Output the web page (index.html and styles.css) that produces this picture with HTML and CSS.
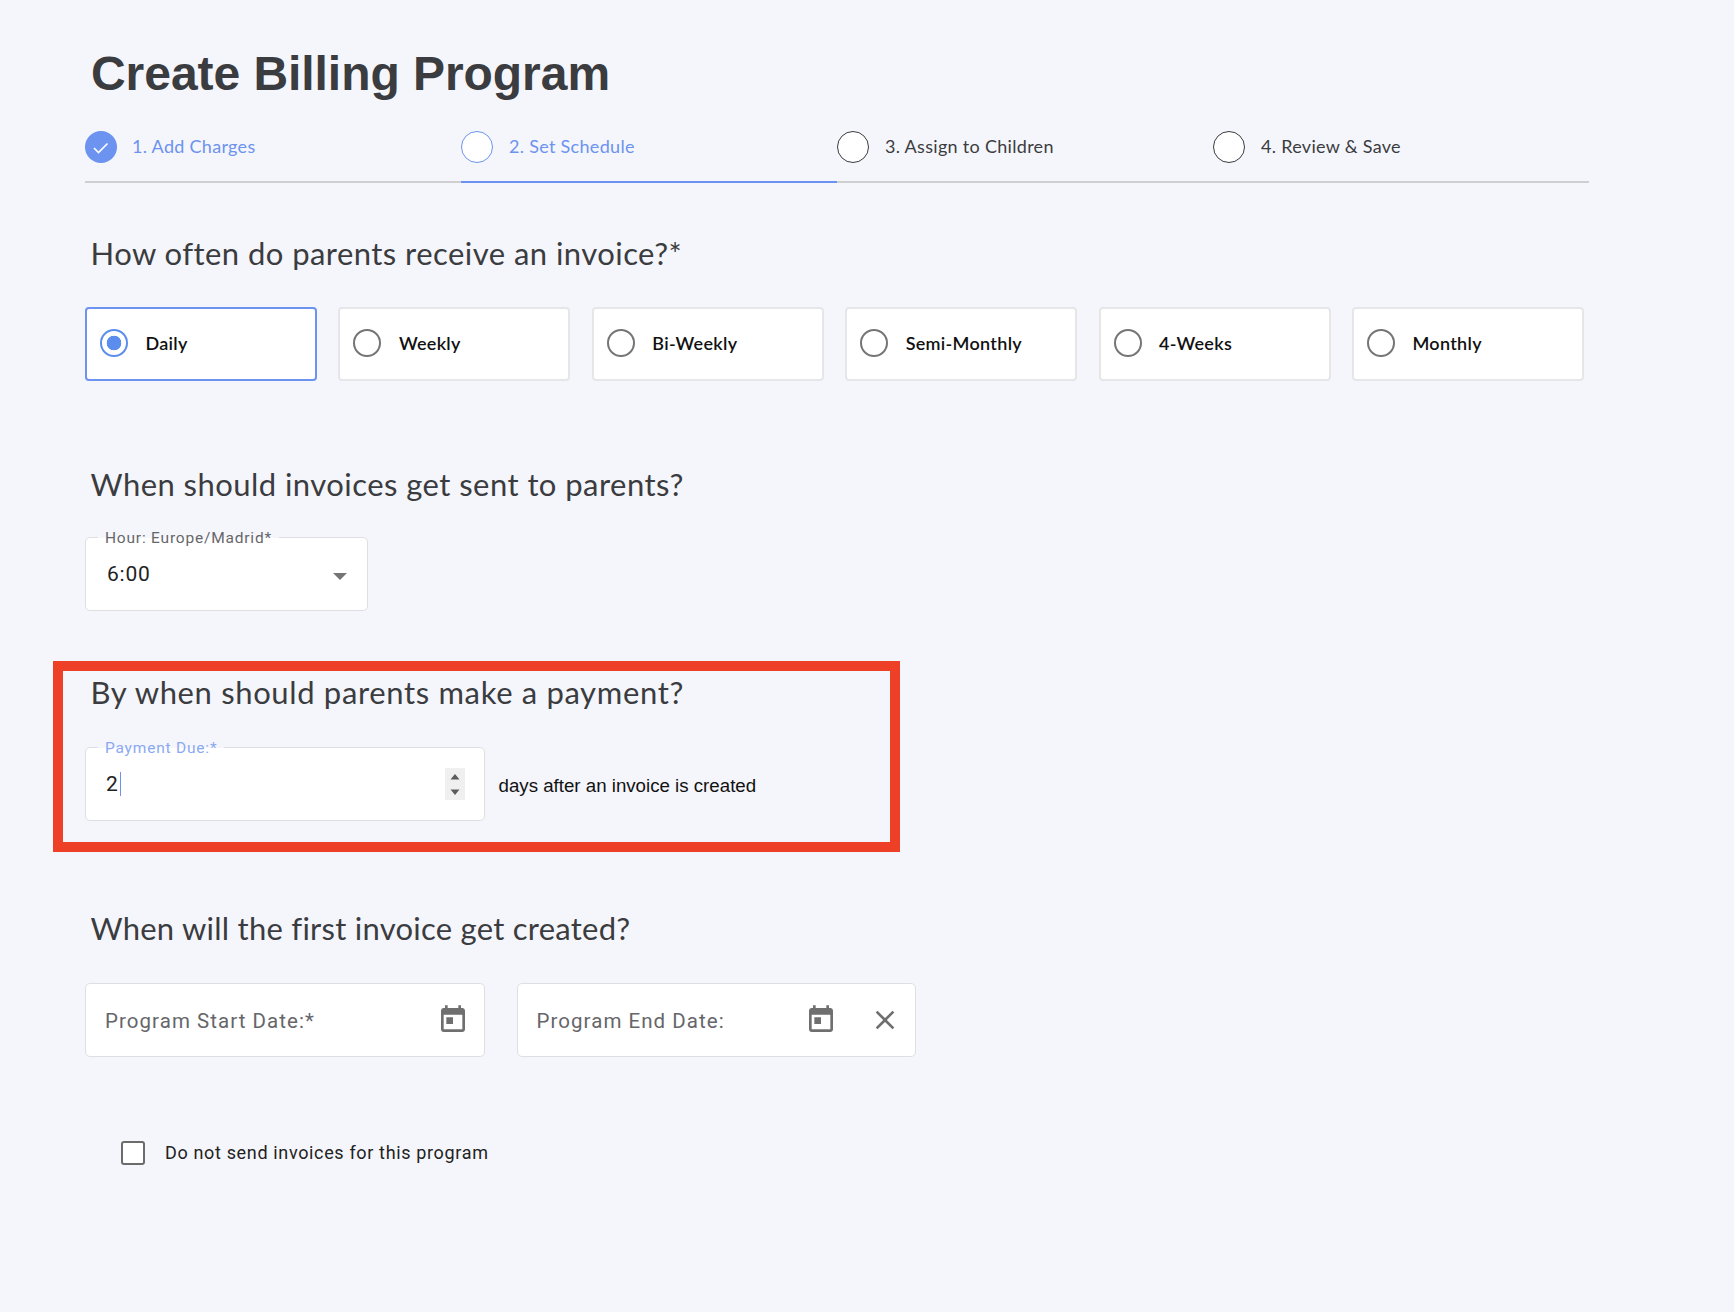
FILE: index.html
```html
<!DOCTYPE html>
<html lang="en">
<head>
<meta charset="utf-8">
<title>Create Billing Program</title>
<link rel="stylesheet" href="styles.css">
</head>
<body>
<main class="page">
  <h1 class="title">Create Billing Program</h1>
  <nav class="steps">
    <div class="step step-done">
      <span class="dot dot-done"><svg viewBox="0 0 32 32" width="32" height="32"><path d="M9 17l4.5 4.5L22.5 12.5" fill="none" stroke="#fff" stroke-width="1.6"/></svg></span>
      <span>1. Add Charges</span>
    </div>
    <div class="step step-active">
      <span class="dot dot-active"></span>
      <span>2. Set Schedule</span>
    </div>
    <div class="step">
      <span class="dot"></span>
      <span>3. Assign to Children</span>
    </div>
    <div class="step">
      <span class="dot"></span>
      <span>4. Review &amp; Save</span>
    </div>
  </nav>

  <section class="sec sec-freq">
    <h2 class="question">How often do parents receive an invoice?*</h2>
    <div class="options">
      <div class="option option-on"><span class="radio radio-on"></span>Daily</div>
      <div class="option"><span class="radio"></span>Weekly</div>
      <div class="option"><span class="radio"></span>Bi-Weekly</div>
      <div class="option"><span class="radio"></span>Semi-Monthly</div>
      <div class="option"><span class="radio"></span>4-Weeks</div>
      <div class="option"><span class="radio"></span>Monthly</div>
    </div>
  </section>

  <section class="sec sec-hour">
    <h2 class="question">When should invoices get sent to parents?</h2>
    <div class="field field-select">
      <span class="legend">Hour: Europe/Madrid*</span>
      <span class="value">6:00</span>
      <span class="caret"></span>
    </div>
  </section>

  <section class="sec sec-pay">
    <div class="highlight"></div>
    <h2 class="question question-wide">By when should parents make a payment?</h2>
    <div class="pay-row">
      <div class="field field-wide">
        <span class="legend legend-blue">Payment Due:*</span>
        <span class="value">2</span><span class="cursor"></span>
        <span class="spin">
          <svg viewBox="0 0 20 32" width="20" height="32"><path d="M10 6l4.5 5.5h-9z M10 27l4.5-5.5h-9z" fill="#5c5c5c"/></svg>
        </span>
      </div>
      <span class="days">days after an invoice is created</span>
    </div>
  </section>

  <section class="sec sec-dates">
    <h2 class="question question-tight">When will the first invoice get created?</h2>
    <div class="date-row">
      <div class="field field-wide">
        <span class="placeholder">Program Start Date:*</span>
        <svg class="cal" viewBox="0 0 24 24" width="32" height="32"><path d="M19 3h-1V1h-2v2H8V1H6v2H5c-1.11 0-1.99.9-1.99 2L3 19c0 1.1.89 2 2 2h14c1.1 0 2-.9 2-2V5c0-1.1-.9-2-2-2zm0 16H5V8h14v11zM7 10h5v5H7z" fill="#6f6f6f"/></svg>
      </div>
      <div class="field field-wide">
        <span class="placeholder">Program End Date:</span>
        <svg class="cal cal-end" viewBox="0 0 24 24" width="32" height="32"><path d="M19 3h-1V1h-2v2H8V1H6v2H5c-1.11 0-1.99.9-1.99 2L3 19c0 1.1.89 2 2 2h14c1.1 0 2-.9 2-2V5c0-1.1-.9-2-2-2zm0 16H5V8h14v11zM7 10h5v5H7z" fill="#6f6f6f"/></svg>
        <svg class="close" viewBox="0 0 24 24" width="32" height="32"><path d="M19 6.41L17.59 5 12 10.59 6.41 5 5 6.41 10.59 12 5 17.59 6.41 19 12 13.41 17.59 19 19 17.59 13.41 12z" fill="#6f6f6f"/></svg>
      </div>
    </div>
  </section>

  <label class="check"><span class="box"></span>Do not send invoices for this program</label>
</main>
</body>
</html>
```
FILE: styles.css
```css
* { box-sizing: border-box; }
html, body { margin: 0; height: 100%; }
body { background: #f5f6fb; color: #3b3c40; font-family: "Lato", "Liberation Sans", sans-serif; overflow: hidden; }
.page { padding: 46px 0 0 85px; width: 1734px; height: 1312px; }
.title { margin: 0 0 0 6px; font: 700 48px/56px "Liberation Sans", Arial, sans-serif; letter-spacing: -.05px; color: #3b3c40; }
.steps { display: grid; grid-template-columns: repeat(4, 376px); width: 1504px; margin-top: 28.5px; border-bottom: 2px solid #cfcfcf; height: 52px; }
.step { display: flex; align-items: flex-start; gap: 16px; height: 52px; font-size: 18px; line-height: 30px; letter-spacing: .3px; color: #3b3c40; }
.step-done { gap: 15px; }
.step-done, .step-active { color: #6c93ef; }
.step-active { border-bottom: 2px solid #6c93ef; }
.dot { width: 32px; height: 32px; border-radius: 50%; background: #fff; border: 1px solid #3b3c40; flex: none; }
.dot-done { background: #6c93ef; border: 0; }
.dot-done svg { display: block; }
.dot-active { border-color: #6c93ef; }
.sec { position: relative; }
.question { margin: 0 0 0 5.5px; font-size: 31px; line-height: 40px; font-weight: 400; letter-spacing: .45px; color: #3b3c40; }
.question-wide { letter-spacing: .65px; }
.question-tight { letter-spacing: .25px; }
.sec-freq { margin-top: 50px; }
.options { display: grid; grid-template-columns: repeat(6, 232px); column-gap: 21.4px; margin-top: 34px; }
.option { height: 74px; background: #fff; border: 2px solid #e6e6e9; border-radius: 4px; display: flex; align-items: center; gap: 17.5px; padding: 0 0 2px 13px; font-size: 18px; font-weight: 600; letter-spacing: .3px; color: #111; }
.option-on { border-color: #6c93ef; }
.radio { width: 28px; height: 28px; border-radius: 50%; border: 2px solid #757575; flex: none; background: #fff; }
.radio-on { border-color: #5b8def; background: radial-gradient(circle, #5b8def 0 7px, #fff 7.6px); }
.sec-hour { margin-top: 83px; }
.field { position: relative; background: #fff; border: 1.5px solid #dfdfe3; border-radius: 5px; height: 74px; display: flex; align-items: center; }
.field-select { width: 283px; margin-top: 33px; padding-left: 20px; }
.field-wide { width: 399.5px; padding-left: 19px; }
.legend { position: absolute; left: 12px; top: -9px; padding: 0 7px; font: 400 15.5px/18px "Roboto", sans-serif; letter-spacing: .8px; color: #66666a; background: linear-gradient(#f5f6fb 50%, #fff 50%); }
.legend-blue { color: #8aa9f2; }
.value { font: 400 21px/24px "Roboto", sans-serif; letter-spacing: .8px; color: #222; margin-left: 1px; }
.caret { position: absolute; right: 20px; top: 35px; border: 7px solid transparent; border-top: 7px solid #757575; border-bottom: 0; }
.sec-pay { margin-top: 61px; }
.highlight { position: absolute; left: -32px; top: -11px; width: 847px; height: 191px; border: 10px solid #ee4026; pointer-events: none; }
.pay-row { display: flex; align-items: center; gap: 14px; margin-top: 35px; }
.days { font: 400 18.7px/24px "Liberation Sans", Arial, sans-serif; color: #111; margin-top: 4px; }
.cursor { width: 1.5px; height: 24px; background: #6c93ef; margin-left: 1px; }
.spin { position: absolute; right: 19px; top: 20px; width: 20px; height: 32px; background: #f0f0f0; }
.spin svg { display: block; }
.sec-dates { margin-top: 87px; }
.date-row { display: flex; gap: 32px; margin-top: 35px; }
.placeholder { font: 400 20.5px/24px "Roboto", sans-serif; letter-spacing: 1.05px; color: #66666a; margin-top: 2px; }
.cal { position: absolute; right: 15px; top: 20px; }
.cal-end { right: 78px; }
.close { position: absolute; right: 14px; top: 20px; }
.check { display: flex; align-items: center; gap: 20px; margin: 84px 0 0 36px; font: 400 18px/24px "Roboto", sans-serif; letter-spacing: .65px; color: #222; }
.box { width: 24px; height: 24px; border: 2px solid #6b6b6b; border-radius: 3px; background: #fff; flex: none; }
```
